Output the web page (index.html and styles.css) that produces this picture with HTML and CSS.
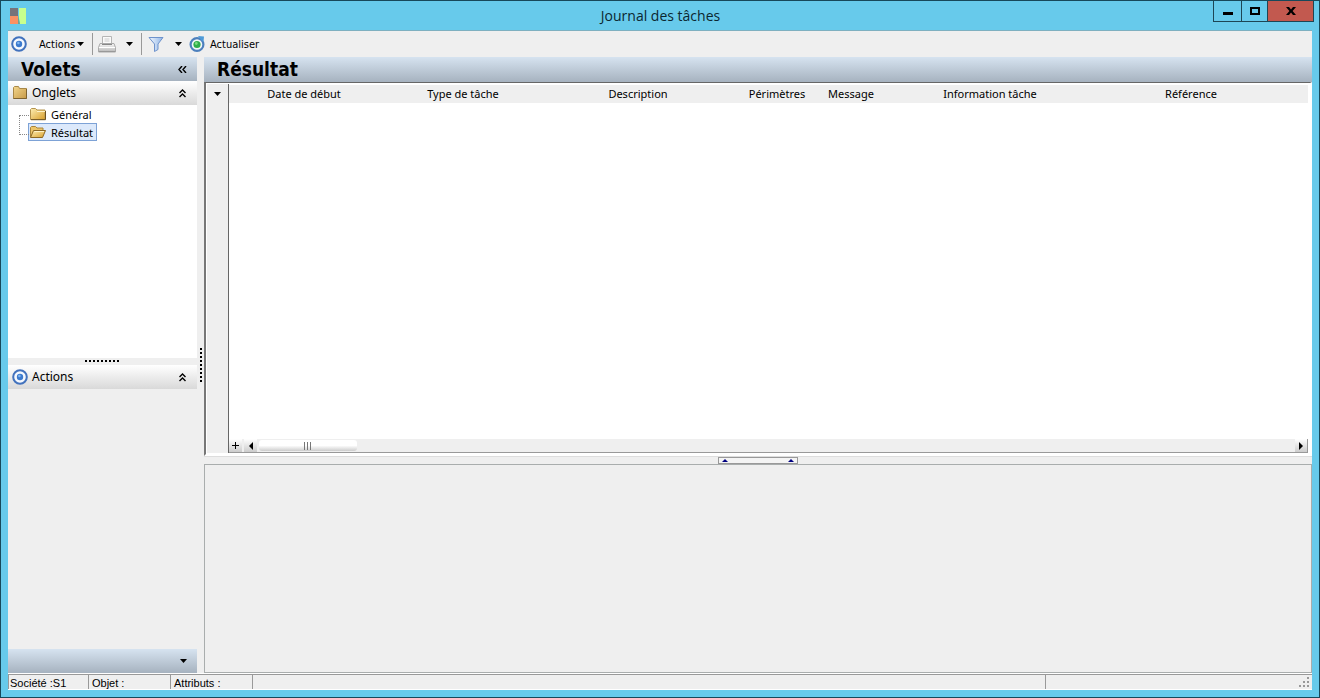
FILE: index.html
```html
<!DOCTYPE html>
<html lang="fr">

<head>
    <meta charset="UTF-8">
    <meta name="viewport" content="width=device-width, initial-scale=1.0">
    <title>Journal des tâches</title>
    <link rel="stylesheet" href="styles.css">
</head>

<body>
    <!-- Shared icons -->
    <svg class="sprite" aria-hidden="true">
        <linearGradient id="gold" x1="0" y1="0" x2="1" y2="1">
            <stop offset="0" stop-color="#fdeeb4"/>
            <stop offset="1" stop-color="#d9a02c"/>
        </linearGradient>
        <linearGradient id="tan" x1="0" y1="0" x2="1" y2="1">
            <stop offset="0" stop-color="#f3d68c"/>
            <stop offset="1" stop-color="#c79a48"/>
        </linearGradient>
        <linearGradient id="funnel" x1="0" y1="0" x2="1" y2="0">
            <stop offset="0" stop-color="#f4f9ff"/>
            <stop offset="1" stop-color="#8fb4e6"/>
        </linearGradient>
        <linearGradient id="paper" x1="0" y1="0" x2="0" y2="1">
            <stop offset="0" stop-color="#f6f6f6"/>
            <stop offset="1" stop-color="#b9b9b9"/>
        </linearGradient>
        <symbol id="target" viewBox="0 0 16 16">
            <circle cx="8" cy="8" r="6.8" fill="#f4f8fe" stroke="#4272bd" stroke-width="2"/>
            <circle cx="8" cy="8" r="3.2" fill="#3c7ace"/>
            <circle cx="7.4" cy="7" r="1.3" fill="#7fb5f0"/>
        </symbol>
        <symbol id="down" viewBox="0 0 7 4">
            <path d="M0 0h7L3.5 4z"/>
        </symbol>
        <symbol id="chevrons" viewBox="0 0 8 9">
            <path d="M1 4l3-3 3 3M1 8l3-3 3 3" fill="none" stroke="#000" stroke-width="1.4"/>
        </symbol>
        <symbol id="folder" viewBox="0 0 16 14">
            <path d="M.5 12.5v-10l1-1h4l1.5 1.5h8v9.5z" fill="url(#gold)" stroke="#b3934e"/>
            <path d="M7 4.5h8" stroke="#fff3c8"/>
            <path d="M1 12.7h14.5V4" fill="none" stroke="#6d5220"/>
        </symbol>
    </svg>

    <div class="window">
        <!-- Title bar -->
        <header class="titlebar">
            <svg class="logo" viewBox="0 0 16 16">
                <path fill="#77737a" d="M0 0h8v8H0z"/>
                <path fill="#fb9163" d="M0 8h8v8H0z"/>
                <path fill="#c8ff8e" d="M9 0h7v16h-6L9 10z"/>
                <path d="M8 7l2 9H8z" fill="#6fa394"/>
            </svg>
            <h1 class="title">Journal des tâches</h1>
            <div class="window-buttons">
                <button class="win-btn" aria-label="Réduire">
                    <svg width="10" height="3"><path d="M0 0h10v3H0z"/></svg>
                </button>
                <button class="win-btn" aria-label="Agrandir">
                    <svg width="10" height="8"><path d="M1 1h8v6H1z" fill="none" stroke="#000" stroke-width="2"/></svg>
                </button>
                <button class="win-btn close" aria-label="Fermer">
                    <svg width="10" height="8"><path d="M0 0h3l2 2.4L7 0h3L6.6 4 10 8H7L5 5.6 3 8H0l3.4-4z"/></svg>
                </button>
            </div>
        </header>

        <!-- Toolbar -->
        <div class="toolbar">
            <button class="tool tool-actions">
                <svg class="icon"><use href="#target"/></svg>
                <span>Actions</span>
                <svg class="arrow"><use href="#down"/></svg>
            </button>
            <button class="tool tool-print" aria-label="Imprimer">
                <svg class="icon print" viewBox="0 0 18 17">
                    <path d="M4.5 .5h9v8h-9z" fill="#fafafa" stroke="#b5b5b5"/>
                    <path d="M6.5 3h5M6.5 5h5" stroke="#ccc"/>
                    <path d="M2 7.5h14l1.5 4v4.5H.5v-4.5z" fill="url(#paper)" stroke="#aaa"/>
                    <path d="M4 8.5h10" stroke="#888"/>
                    <path d="M1 11.5h16" stroke="#fff"/>
                    <path d="M1 15.5h16" stroke="#999"/>
                </svg>
                <svg class="arrow"><use href="#down"/></svg>
            </button>
            <button class="tool tool-filter" aria-label="Filtrer">
                <svg class="icon" viewBox="0 0 16 16">
                    <path d="M1 1.5h14L10 8v5.5L6.5 15.5V8z" fill="url(#funnel)" stroke="#6f93cc"/>
                </svg>
                <svg class="arrow"><use href="#down"/></svg>
            </button>
            <button class="tool tool-refresh">
                <svg class="icon" viewBox="0 0 16 16">
                    <circle cx="8" cy="8.5" r="6.4" fill="#f2f7f8" stroke="#4d80bd" stroke-width="2.2"/>
                    <path d="M9 0l6 .5-.5 5.5-2.5-2z" fill="#4f9bd8"/>
                    <circle cx="8" cy="8.5" r="3.6" fill="#2fae4b"/>
                    <circle cx="7.3" cy="7.5" r="1.4" fill="#7bdc7e"/>
                </svg>
                <span>Actualiser</span>
            </button>
        </div>

        <!-- Workspace -->
        <div class="workspace">
            <aside class="sidebar">
                <div class="pane-title">
                    <h2>Volets</h2>
                    <button class="bare" aria-label="Masquer les volets">
                        <svg width="9" height="7"><path d="M4 0L1 3.5 4 7M8 0L5 3.5 8 7" fill="none" stroke="#000" stroke-width="1.4"/></svg>
                    </button>
                </div>
                <div class="section-title">
                    <svg class="section-icon" viewBox="0 0 16 16">
                        <path d="M1.5 13.5v-11l1-1h4l1 2h7v10z" fill="url(#tan)" stroke="#a88848"/>
                        <path d="M1.5 13.5h13V4" fill="none" stroke="#7d6230"/>
                    </svg>
                    <h3>Onglets</h3>
                    <button class="bare" aria-label="Réduire Onglets"><svg class="chevrons"><use href="#chevrons"/></svg></button>
                </div>
                <nav class="tree">
                    <ul>
                        <li>
                            <a href="#general"><svg class="folder"><use href="#folder"/></svg>Général</a>
                        </li>
                        <li>
                            <a href="#resultat" class="selected">
                                <svg class="folder" viewBox="0 0 16 14">
                                    <path d="M.5 12V2.5l1-1h4L7 3h6v3" fill="#ecc56a" stroke="#a8853c"/>
                                    <path d="M3.5 5.5h12l-3 7H.5z" fill="url(#gold)" stroke="#8b6724"/>
                                    <path d="M4.5 6.5h9.5" stroke="#fff3c8"/>
                                </svg>Résultat</a>
                        </li>
                    </ul>
                </nav>
                <div class="splitter-h"><span class="grip-h"></span></div>
                <div class="section-title">
                    <svg class="section-icon"><use href="#target"/></svg>
                    <h3>Actions</h3>
                    <button class="bare" aria-label="Réduire Actions"><svg class="chevrons"><use href="#chevrons"/></svg></button>
                </div>
                <div class="actions-body"></div>
                <div class="pane-title pane-foot">
                    <button class="bare" aria-label="Plus de volets"><svg class="arrow"><use href="#down"/></svg></button>
                </div>
            </aside>

            <div class="splitter-v"><span class="grip-v"></span></div>

            <main class="content">
                <div class="pane-title content-title">
                    <h2>Résultat</h2>
                </div>
                <section class="grid">
                    <div class="row-selector">
                        <button class="bare" aria-label="Options de la grille"><svg class="arrow"><use href="#down"/></svg></button>
                    </div>
                    <div class="grid-body">
                        <table>
                            <colgroup>
                                <col class="col-date">
                                <col class="col-type">
                                <col class="col-description">
                                <col class="col-perimetres">
                                <col class="col-message">
                                <col class="col-information">
                                <col class="col-reference">
                                <col>
                            </colgroup>
                            <thead>
                                <tr>
                                    <th>Date de début</th>
                                    <th>Type de tâche</th>
                                    <th>Description</th>
                                    <th>Périmètres</th>
                                    <th>Message</th>
                                    <th>Information tâche</th>
                                    <th>Référence</th>
                                    <td></td>
                                </tr>
                            </thead>
                        </table>
                        <div class="scrollbar">
                            <button class="scroll-btn add" aria-label="Ajouter">
                                <svg width="7" height="7"><path d="M3 0h1v3h3v1H4v3H3V4H0V3h3z"/></svg>
                            </button>
                            <button class="scroll-btn" aria-label="Défiler à gauche">
                                <svg width="4" height="8"><path d="M4 0v8L0 4z"/></svg>
                            </button>
                            <div class="track">
                                <div class="thumb">
                                    <svg width="8" height="8"><path d="M.5 0v8M3.5 0v8M6.5 0v8" stroke="#777"/></svg>
                                </div>
                            </div>
                            <button class="scroll-btn right" aria-label="Défiler à droite">
                                <svg width="4" height="8"><path d="M0 0v8l4-4z"/></svg>
                            </button>
                        </div>
                    </div>
                </section>
                <div class="splitter-content">
                    <button class="collapse" aria-label="Réduire la grille">
                        <svg width="6" height="3"><path d="M0 3h6L3 0z"/></svg>
                        <svg width="6" height="3"><path d="M0 3h6L3 0z"/></svg>
                    </button>
                </div>
                <section class="detail"></section>
            </main>
        </div>

        <!-- Status bar -->
        <footer class="statusbar">
            <span class="status status-company">Société :S1</span>
            <span class="status status-object">Objet :</span>
            <span class="status status-attributes">Attributs :</span>
            <span class="status status-message"></span>
            <span class="status status-end">
                <svg width="11" height="11" fill="#999">
                    <path d="M8 0h2v2H8zM4 4h2v2H4zM8 4h2v2H8zM0 8h2v2H0zM4 8h2v2H4zM8 8h2v2H8z"/>
                </svg>
            </span>
        </footer>
    </div>
</body>

</html>
```

FILE: styles.css
```css
* {
    box-sizing: border-box;
}

body {
    margin: 0;
    font-family: "Noto Sans", sans-serif;
    font-size: 12px;
    color: #000;
}

h1,
h2,
h3,
ul {
    margin: 0;
    padding: 0;
    font-weight: normal;
}

button {
    margin: 0;
    padding: 0;
    border: none;
    background: none;
    font: inherit;
    color: inherit;
}

svg {
    display: block;
    flex: none;
}

.sprite {
    position: absolute;
    width: 0;
    height: 0;
}

.window {
    display: flex;
    flex-direction: column;
    height: 100vh;
    padding: 0 7px 7px;
    border: 1px solid #17485a;
    background: #67caeb;
}

/* Title bar */
.titlebar {
    display: flex;
    align-items: center;
    height: 30px;
    border-bottom: 1px solid #7eb0c0;
    flex: none;
}

.logo {
    width: 16px;
    height: 16px;
    margin-left: 2px;
}

.title {
    flex: 1;
    padding-left: 82px;
    font-family: "Open Sans", sans-serif;
    font-size: 14px;
    line-height: 20px;
    text-align: center;
    color: #0b2730;
}

.window-buttons {
    display: flex;
    align-self: flex-start;
    margin-right: -2px;
    border: 1px solid #1d4655;
    border-top: none;
}

.win-btn {
    display: flex;
    align-items: center;
    justify-content: center;
    width: 28px;
    height: 20px;
    border-right: 1px solid #1d4655;
}

.win-btn:first-child {
    padding-top: 5px;
}

.win-btn:nth-child(2) {
    width: 26px;
}

.win-btn.close {
    width: 45px;
    border-right: none;
    background: #c2594f;
}

/* Toolbar */
.toolbar {
    display: flex;
    align-items: center;
    height: 26px;
    background: #efefef;
    font-family: "DejaVu Sans Condensed", sans-serif;
    font-size: 11px;
    flex: none;
}

.tool {
    display: flex;
    align-items: center;
    height: 22px;
}

.icon {
    width: 16px;
    height: 16px;
}

.icon.print {
    width: 18px;
    height: 17px;
}

.arrow {
    width: 7px;
    height: 4px;
}

.tool-actions {
    width: 85px;
    padding-left: 3px;
    border-right: 1px solid #999;
}

.tool-actions span {
    margin-left: 12px;
    margin-right: 2px;
}

.tool-print {
    gap: 10px;
    width: 49px;
    padding-left: 5px;
    border-right: 1px solid #999;
}

.tool-filter {
    gap: 11px;
    padding-left: 6px;
}

.tool-refresh {
    gap: 5px;
    padding-left: 7px;
}

/* Workspace */
.workspace {
    display: flex;
    flex: 1;
    min-height: 0;
    background: #efefef;
}

.sidebar {
    display: flex;
    flex-direction: column;
    width: 189px;
    flex: none;
}

.pane-title {
    display: flex;
    align-items: center;
    justify-content: space-between;
    height: 24px;
    padding: 0 10px 0 13px;
    background: linear-gradient(#d6e3f0, #a6b2bf);
    flex: none;
}

.pane-title h2 {
    font-family: "DejaVu Sans Condensed", sans-serif;
    font-size: 19px;
    font-weight: bold;
    line-height: 24px;
}

.pane-foot {
    justify-content: flex-end;
}

.section-title {
    display: flex;
    align-items: center;
    height: 24px;
    padding: 0 10px 0 4px;
    background: linear-gradient(#fff, #d9d9d9);
    flex: none;
}

.section-icon {
    width: 16px;
    height: 16px;
    margin-right: 4px;
}

.section-title h3 {
    flex: 1;
    font-size: 12px;
    line-height: 24px;
}

.chevrons {
    width: 9px;
    height: 9px;
}

.tree {
    height: 253px;
    padding: 0 11px;
    background: #fff;
    font-size: 11px;
}

.tree ul {
    position: relative;
    list-style: none;
    padding-left: 9px;
}

/* dotted branch lines */
.tree ul::before {
    content: "";
    position: absolute;
    left: 0;
    top: 10px;
    width: 9px;
    height: 18px;
    border: 1px dotted #888;
    border-right: none;
}

.tree li {
    display: flex;
}

.tree a {
    display: flex;
    align-items: center;
    gap: 5px;
    height: 18px;
    padding: 0 3px 0 1px;
    border: 1px solid transparent;
    color: #000;
    text-decoration: none;
}

.tree a.selected {
    border-color: #7da2d6;
    background: #dce9fb;
}

.folder {
    width: 16px;
    height: 14px;
}

.splitter-h {
    display: flex;
    justify-content: center;
    height: 7px;
    padding-top: 2px;
    flex: none;
}

.grip-h {
    width: 35px;
    height: 2px;
    background: repeating-linear-gradient(90deg, #000 0 2px, transparent 2px 4px);
}

.actions-body {
    flex: 1;
}

.splitter-v {
    display: flex;
    justify-content: center;
    width: 7px;
    padding-top: 291px;
    flex: none;
}

.grip-v {
    width: 2px;
    height: 35px;
    background: repeating-linear-gradient(#000 0 2px, transparent 2px 4px);
}

/* Result grid */
.content {
    display: flex;
    flex-direction: column;
    flex: 1;
    min-width: 0;
}

.content-title {
    height: 25px;
    align-items: flex-start;
}

.grid {
    display: flex;
    flex: 1;
    border: 2px solid #fff;
    border-left-color: #777;
    border-top: 1px solid #666;
    background: #fff;
    min-height: 0;
}

.row-selector {
    display: flex;
    justify-content: center;
    align-items: flex-start;
    width: 22px;
    margin: 1px 0 1px 1px;
    padding-top: 8px;
    border-right: 1px solid #666;
    background: #efefef;
    flex: none;
}

.grid-body {
    display: flex;
    flex-direction: column;
    justify-content: space-between;
    flex: 1;
    padding: 2px 2px 1px 0;
    min-width: 0;
}

table {
    width: 100%;
    table-layout: fixed;
    border-collapse: collapse;
    background: #efefef;
}

th,
td {
    height: 18px;
    padding: 0;
    font-size: 11px;
    font-weight: normal;
    line-height: 18px;
    white-space: nowrap;
    text-align: center;
}

.col-date {
    width: 150px;
}

.col-type {
    width: 168px;
}

.col-description {
    width: 182px;
}

.col-perimetres {
    width: 96px;
}

.col-message {
    width: 52px;
}

.col-information {
    width: 226px;
}

.col-reference {
    width: 176px;
}

.scrollbar {
    display: flex;
    height: 14px;
    border-bottom: 1px solid #999;
    background: #efefef;
}

.scroll-btn {
    display: flex;
    align-items: center;
    justify-content: center;
    width: 13px;
    background: linear-gradient(#fff, #ccc);
}

.scroll-btn.add {
    margin-right: 2px;
}

.scroll-btn.right {
    border-right: 1px solid #999;
}

.track {
    flex: 1;
    padding: 1px 2px;
}

.thumb {
    display: flex;
    align-items: center;
    justify-content: center;
    width: 98px;
    height: 11px;
    border-radius: 3px;
    background: linear-gradient(#fff 50%, #ccc);
}

.splitter-content {
    display: flex;
    justify-content: center;
    height: 8px;
    border-top: 1px solid #ddd;
    flex: none;
}

.collapse {
    display: flex;
    align-items: center;
    justify-content: space-between;
    width: 80px;
    height: 7px;
    padding: 0 3px;
    border: 1px solid #999;
    background: #f4f4f4;
    fill: #000080;
}

.detail {
    height: 209px;
    border: 1px solid #a9adad;
    flex: none;
}

/* Status bar */
.statusbar {
    display: flex;
    height: 17px;
    border-bottom: 1px solid #fff;
    border-top: 1px solid #fff;
    background: #efefef;
    font-family: "Liberation Sans", sans-serif;
    font-size: 11px;
    line-height: 16px;
    flex: none;
}

.status {
    padding-left: 3px;
    border-top: 1px solid #999;
    border-right: 1px solid #999;
    white-space: nowrap;
}

.status-company {
    width: 81px;
    padding-left: 1px;
    border-left: 1px solid #999;
}

.status-object {
    width: 82px;
}

.status-attributes {
    width: 82px;
}

.status-message {
    flex: 1;
}

.status-end {
    display: flex;
    align-items: flex-end;
    justify-content: flex-end;
    width: 266px;
    padding: 0 2px 1px 0;
    border-right: none;
}
```
